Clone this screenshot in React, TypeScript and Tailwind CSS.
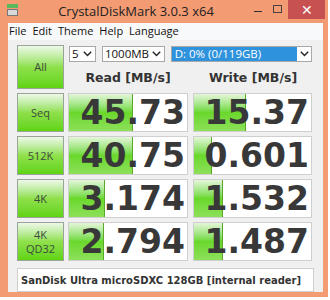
import React from "react";

type Row = { label: string[]; read: string; write: string; readBar: number; writeBar: number };

const ROWS: Row[] = [
  { label: ["Seq"], read: "45.73", write: "15.37", readBar: 64, writeBar: 52 },
  { label: ["512K"], read: "40.75", write: "0.601", readBar: 64, writeBar: 18 },
  { label: ["4K"], read: "3.174", write: "1.532", readBar: 36, writeBar: 29 },
  { label: ["4K", "QD32"], read: "2.794", write: "1.487", readBar: 35, writeBar: 29 },
];

const btn =
  "flex flex-col items-center justify-center border border-[#9aa59a] bg-linear-to-b from-[#eef8e8] via-[#8fe04a] to-[#5fd40e] text-[11px] leading-[14px] text-[#3d4a3d]";

function Chevron() {
  return (
    <svg width="9" height="6" viewBox="0 0 9 6" className="shrink-0">
      <path d="M0.8 0.8 L4.5 4.6 L8.2 0.8" fill="none" stroke="#222" strokeWidth="1.4" />
    </svg>
  );
}

function Select({ value, width }: { value: string; width: string }) {
  return (
    <div className={`flex h-[16px] ${width} items-center justify-between border border-[#a8a8a8] bg-white pl-[2px] pr-[3px] text-[11.5px] text-[#111]`}>
      <span className="leading-none">{value}</span>
      <Chevron />
    </div>
  );
}

function Cell({ value, bar }: { value: string; bar: number }) {
  return (
    <div className="relative h-[39px] overflow-hidden border border-[#cfcfcf] bg-white">
      <div
        className="absolute inset-y-0 left-0 border-r border-[#5aa82a] bg-linear-to-b from-[#e4f6d8] via-[#6ad82a] to-[#8de058]"
        style={{ width: bar }}
      />
      <div className="relative flex h-full items-center justify-end pr-[2px] font-['DejaVu_Sans',sans-serif] text-[33px] font-bold leading-none text-[#383838]">
        {value}
      </div>
    </div>
  );
}

export default function App() {
  return (
    <div className="h-[300px] w-[330px] bg-white font-['Open_Sans',sans-serif]">
      <div className="flex h-[297px] w-[328px] flex-col bg-[#f39b72]">
        <div className="flex h-[23px] items-start">
          <div className="ml-[7px] mt-[4px] flex h-[13px] w-[11px] flex-col">
            <div className="h-[4px] bg-[#5cb85c]" />
            <div className="mt-[1px] h-[7px] border border-[#777] bg-[#d8d8d8]" />
          </div>
          <div className="flex-1 pt-[3px] text-center text-[13px] leading-[17px] text-[#222]">
            CrystalDiskMark 3.0.3 x64
          </div>
          <div className="mt-[11px] h-[1px] w-[8px] bg-[#333]" />
          <div className="ml-[11px] mt-[5px] h-[8px] w-[9px] border border-[#444]" />
          <div className="ml-[6px] flex h-[19px] w-[37px] items-center justify-center bg-[#c75050] text-[14px] leading-none text-white">
            ✕
          </div>
          <div className="w-[3px]" />
        </div>
        <div className="ml-[8px] mr-[5px] flex flex-1 flex-col bg-[#f0f0f0]">
          <div className="flex h-[17px] items-center gap-[6px] bg-[#f8f9fa] pl-[1px] text-[11px] text-[#111]">
            <span>File</span>
            <span>Edit</span>
            <span>Theme</span>
            <span>Help</span>
            <span>Language</span>
          </div>
          <div className="flex flex-col gap-[4px] pl-[9px] pt-[5px]">
            <div className="grid grid-cols-[47px_120px_120px] gap-x-[4px]">
              <div className={`${btn} h-[44px]`}>All</div>
              <div className="col-span-2 flex flex-col">
                <div className="flex gap-[6px] pl-[1px] pt-[1px]">
                  <Select value="5" width="w-[27px]" />
                  <Select value="1000MB" width="w-[63px]" />
                  <div className="flex h-[16px] w-[142px] items-center border border-[#a8a8a8] bg-white">
                    <div className="flex h-full flex-1 items-center bg-[#2e92dc] pl-[3px] text-[11.5px] leading-none text-white">
                      D: 0% (0/119GB)
                    </div>
                    <div className="flex w-[14px] justify-center">
                      <Chevron />
                    </div>
                  </div>
                </div>
                <div className="mt-[7px] grid grid-cols-[120px_120px] gap-x-[5px] font-['DejaVu_Sans',sans-serif] text-[12.5px] font-bold text-[#333]">
                  <div className="text-center">Read [MB/s]</div>
                  <div className="text-center">Write [MB/s]</div>
                </div>
              </div>
            </div>
            {ROWS.map((row) => (
              <div key={row.read} className="grid grid-cols-[47px_120px_120px] gap-x-[4px]">
                <div className={`${btn} h-[39px]`}>
                  {row.label.map((l) => (
                    <span key={l}>{l}</span>
                  ))}
                </div>
                <Cell value={row.read} bar={row.readBar} />
                <div className="ml-[1px]">
                  <Cell value={row.write} bar={row.writeBar} />
                </div>
              </div>
            ))}
            <div className="mt-[3px] flex h-[24px] w-[297px] items-center whitespace-nowrap border border-[#cfcfcf] bg-white pl-[3px] font-['DejaVu_Sans',sans-serif] text-[10px] font-bold text-[#333]">
              SanDisk Ultra microSDXC 128GB [internal reader]
            </div>
          </div>
        </div>
        <div className="h-[5px]" />
      </div>
    </div>
  );
}
